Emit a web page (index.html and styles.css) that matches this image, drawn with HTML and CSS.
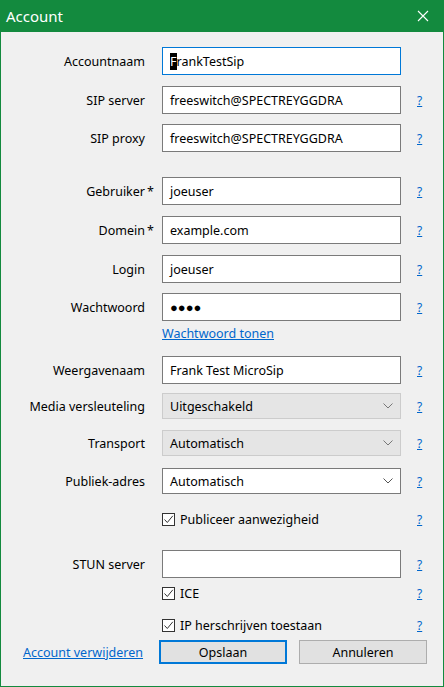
FILE: index.html
```html
<!DOCTYPE html>
<html lang="nl">
<head>
<meta charset="utf-8">
<title>Account</title>
<link rel="stylesheet" href="styles.css">
</head>
<body>
<div class="win">
  <div class="titlebar">
    <span class="title">Account</span>
    <svg class="close" width="12" height="12" viewBox="0 0 12 12"><path d="M1 1L11 11M11 1L1 11" stroke="#fff" stroke-width="1.1" fill="none"/></svg>
  </div>
  <div class="content">
    <div class="row">
      <span class="lbl">Accountnaam</span><span></span>
      <div class="field focus"><span class="sel">F</span>rankTestSip</div><span></span>
    </div>
    <div class="row mt11">
      <span class="lbl">SIP server</span><span></span>
      <div class="field">freeswitch@SPECTREYGGDRA</div><a class="help">?</a>
    </div>
    <div class="row mt10">
      <span class="lbl">SIP proxy</span><span></span>
      <div class="field">freeswitch@SPECTREYGGDRA</div><a class="help">?</a>
    </div>

    <div class="row mt25">
      <span class="lbl">Gebruiker</span><span class="req">*</span>
      <div class="field">joeuser</div><a class="help">?</a>
    </div>
    <div class="row mt11">
      <span class="lbl">Domein</span><span class="req">*</span>
      <div class="field">example.com</div><a class="help">?</a>
    </div>
    <div class="row mt11">
      <span class="lbl">Login</span><span></span>
      <div class="field">joeuser</div><a class="help">?</a>
    </div>
    <div class="row mt10">
      <span class="lbl">Wachtwoord</span><span></span>
      <div class="field pw">●●●●</div><a class="help">?</a>
    </div>
    <div class="linkrow">
      <a class="link">Wachtwoord tonen</a>
    </div>

    <div class="row mt11">
      <span class="lbl">Weergavenaam</span><span></span>
      <div class="field">Frank Test MicroSip</div><a class="help">?</a>
    </div>
    <div class="row combo-row mt9">
      <span class="lbl">Media versleuteling</span><span></span>
      <div class="combo disabled"><span>Uitgeschakeld</span><svg class="chev" width="10" height="6" viewBox="0 0 10 6"><path d="M0.5 0.5L5 5L9.5 0.5" stroke="#777" stroke-width="1" fill="none"/></svg></div><a class="help">?</a>
    </div>
    <div class="row combo-row mt11">
      <span class="lbl">Transport</span><span></span>
      <div class="combo disabled"><span>Automatisch</span><svg class="chev" width="10" height="6" viewBox="0 0 10 6"><path d="M0.5 0.5L5 5L9.5 0.5" stroke="#777" stroke-width="1" fill="none"/></svg></div><a class="help">?</a>
    </div>
    <div class="row combo-row mt12">
      <span class="lbl">Publiek-adres</span><span></span>
      <div class="combo"><span>Automatisch</span><svg class="chev" width="10" height="6" viewBox="0 0 10 6"><path d="M0.5 0.5L5 5L9.5 0.5" stroke="#555" stroke-width="1" fill="none"/></svg></div><a class="help">?</a>
    </div>
    <div class="row mt11">
      <span></span><span></span>
      <label class="check"><span class="box"><svg width="11" height="11" viewBox="0 0 11 11"><path d="M1.5 5.5L4.3 8.5L9.8 1.8" stroke="#333" stroke-width="1" fill="none"/></svg></span>Publiceer aanwezigheid</label><a class="help">?</a>
    </div>

    <div class="row mt17">
      <span class="lbl">STUN server</span><span></span>
      <div class="field"></div><a class="help">?</a>
    </div>
    <div class="row mt1">
      <span></span><span></span>
      <label class="check"><span class="box"><svg width="11" height="11" viewBox="0 0 11 11"><path d="M1.5 5.5L4.3 8.5L9.8 1.8" stroke="#333" stroke-width="1" fill="none"/></svg></span>ICE</label><a class="help">?</a>
    </div>
    <div class="row mt4">
      <span></span><span></span>
      <label class="check"><span class="box"><svg width="11" height="11" viewBox="0 0 11 11"><path d="M1.5 5.5L4.3 8.5L9.8 1.8" stroke="#333" stroke-width="1" fill="none"/></svg></span>IP herschrijven toestaan</label><a class="help">?</a>
    </div>

    <div class="btnrow">
      <a class="link del">Account verwijderen</a>
      <button class="btn default">Opslaan</button>
      <button class="btn">Annuleren</button>
    </div>
  </div>
</div>
</body>
</html>
```
FILE: styles.css
```css
* { box-sizing: border-box; }
html, body { margin: 0; padding: 0; }
body {
  font-family: "Segoe UI", "Noto Sans", "Open Sans", sans-serif;
  font-size: 12.5px;
  color: #000;
  background: #f0f0f0;
}
.win {
  width: 444px;
  height: 687px;
  border: 1px solid #138a3e;
  border-top: 0;
  background: #f0f0f0;
  display: flex;
  flex-direction: column;
}
.titlebar {
  height: 32px;
  margin: 0 -1px;
  background: #138a3e;
  color: #fff;
  display: flex;
  align-items: center;
  justify-content: space-between;
  padding: 0 15px 0 6px;
}
.title { font-size: 15px; }
.close { display: block; }
.content {
  padding-top: 15px;
  display: flex;
  flex-direction: column;
}
.row {
  display: grid;
  grid-template-columns: 144px 17px 239px 16px auto;
  align-items: center;
  height: 28px;
}
.combo-row { height: 26px; }
.mt1 { margin-top: 1px; }
.mt4 { margin-top: 4px; }
.mt9 { margin-top: 9px; }
.mt10 { margin-top: 10px; }
.mt11 { margin-top: 11px; }
.mt12 { margin-top: 12px; }
.mt17 { margin-top: 17px; }
.mt25 { margin-top: 25px; }
.lbl {
  grid-column: 1;
  text-align: right;
  white-space: nowrap;
}
.req { padding-left: 2px; align-self: center; }
.field {
  grid-column: 3;
  height: 28px;
  border: 1px solid #7a7a7a;
  background: #fff;
  padding: 0 7px;
  display: flex;
  align-items: center;
  white-space: nowrap;
  overflow: hidden;
}
.field.focus { border-color: #0078d7; }
.sel { background: #000; color: #fff; }
.pw { font-size: 13px; letter-spacing: 0; }
.help {
  grid-column: 5;
  color: #0066cc;
  text-decoration: underline;
  font-size: 12px;
}
.linkrow {
  height: 24px;
  line-height: 26px;
  padding-left: 161px;
}
.link { color: #0066cc; text-decoration: underline; }
.combo {
  grid-column: 3;
  height: 26px;
  border: 1px solid #7a7a7a;
  background: #fff;
  padding: 0 7px 0 7px;
  display: flex;
  align-items: center;
  justify-content: space-between;
}
.combo.disabled { background: #e5e5e5; border-color: #cccccc; }
.chev { display: block; }
.check {
  grid-column: 3;
  display: flex;
  align-items: center;
  gap: 5px;
  white-space: nowrap;
}
.box {
  width: 13px;
  height: 13px;
  border: 1px solid #333;
  background: #fff;
  display: flex;
  align-items: center;
  justify-content: center;
}
.box svg { display: block; }
.btnrow {
  margin-top: 1px;
  display: grid;
  grid-template-columns: 146px 128px 128px;
  column-gap: 12px;
  align-items: center;
  height: 24px;
}
.del { padding-left: 22px; white-space: nowrap; }
.btn {
  height: 24px;
  font: inherit;
  color: #000;
  background: #e1e1e1;
  border: 1px solid #adadad;
  padding: 0;
}
.btn.default { border: 2px solid #0078d7; }
```
